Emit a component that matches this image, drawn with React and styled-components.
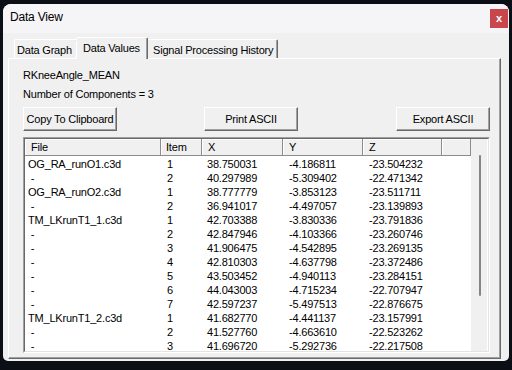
import React from 'react';
import styled, { createGlobalStyle } from 'styled-components';

const GlobalStyle = createGlobalStyle`
  html, body {
    margin: 0;
    padding: 0;
    background: #0b0e15;
  }
  body {
    font-family: "Liberation Sans", Arial, sans-serif;
    font-size: 11px;
    letter-spacing: -0.2px;
    color: #000;
  }
`;

const Desktop = styled.div`
  width: 512px;
  height: 370px;
  padding: 4px 0 0 3px;
  box-sizing: border-box;
  overflow: hidden;
`;

const Window = styled.div`
  width: 506px;
  height: 357px;
  background: #f0f0f0;
  border-radius: 8px 8px 5px 5px;
  overflow: hidden;
  display: flex;
  flex-direction: column;
`;

const TitleBar = styled.div`
  height: 29px;
  flex: none;
  background: #f5f4f6;
  display: flex;
  align-items: center;
  justify-content: space-between;
  padding: 0 1px 0 7px;
`;

const Title = styled.span`
  font-size: 12px;
  padding-bottom: 4px;
`;

const CloseButton = styled.div`
  width: 18px;
  height: 19px;
  background: #c8464c;
  color: #fff;
  font-weight: bold;
  font-size: 11px;
  display: flex;
  align-items: center;
  justify-content: center;
  padding-bottom: 2px;
  box-sizing: border-box;
`;

const Client = styled.div`
  flex: 1;
  min-height: 0;
  padding: 4px 8px 2px 5px;
  display: flex;
  flex-direction: column;
`;

const TabStrip = styled.div`
  display: flex;
  align-items: flex-end;
  height: 22px;
  padding-left: 6px;
  margin-bottom: -1px;
  position: relative;
  z-index: 1;
`;

const Tab = styled.div`
  box-sizing: border-box;
  width: ${p => p.$w}px;
  height: ${p => (p.$active ? 22 : 19)}px;
  margin: ${p => (p.$active ? '0 -2px' : '0 0 1px')};
  padding: 3px 0 0 ${p => p.$pad}px;
  line-height: 15px;
  white-space: nowrap;
  background: #f0f0f0;
  border: 1px solid;
  border-bottom: none;
  border-color: #fff #696969 transparent #fff;
  box-shadow: inset -1px 0 #a0a0a0;
  border-radius: 2px 2px 0 0;
  position: relative;
  z-index: ${p => (p.$active ? 2 : 1)};
`;

const Panel = styled.div`
  flex: 1;
  min-height: 0;
  border: 1px solid;
  border-color: #fff #696969 #696969 #fff;
  box-shadow: inset -1px -1px #a0a0a0;
  padding: 7px 10px 0 14px;
  display: flex;
  flex-direction: column;
`;

const Label = styled.div`
  line-height: 19px;
  white-space: nowrap;
`;

const ButtonRow = styled.div`
  display: flex;
  margin-top: 3px;
`;

const Button = styled.button`
  width: 94px;
  height: 24px;
  box-sizing: border-box;
  padding: 0;
  font: inherit;
  letter-spacing: inherit;
  color: #000;
  background: #f0f0f0;
  border: 1px solid;
  border-color: #fff #696969 #696969 #fff;
  box-shadow: inset -1px -1px #a0a0a0;
  margin-left: ${p => p.$ml || '0'};
`;

const ListView = styled.div`
  margin-top: 6px;
  height: 216px;
  box-sizing: border-box;
  border: 1px solid;
  border-color: #a0a0a0 #fff #fff #a0a0a0;
`;

const ListInner = styled.div`
  height: 100%;
  box-sizing: border-box;
  border: 1px solid;
  border-color: #696969 #e3e3e3 #e3e3e3 #696969;
  display: flex;
  background: #fff;
  overflow: hidden;
`;

const Table = styled.div`
  width: 446px;
  flex: none;
`;

const COLS = '136px 41px 81px 80px 79px 29px';

const HeaderRow = styled.div`
  display: grid;
  grid-template-columns: ${COLS};
  height: 17px;
`;

const HeaderCell = styled.div`
  box-sizing: border-box;
  background: #f0f0f0;
  border-right: 1px solid #8c8c8c;
  border-bottom: 1px solid #8c8c8c;
  box-shadow: inset 1px 1px #fff;
  padding-left: ${p => p.$pad}px;
  line-height: 16px;
  white-space: nowrap;
`;

const Rows = styled.div`
  padding-top: 1px;
`;

const Row = styled.div`
  display: grid;
  grid-template-columns: ${COLS};
  height: 14px;
  line-height: 14px;
`;

const Cell = styled.div`
  padding-left: ${p => p.$pad}px;
  white-space: pre;
  overflow: hidden;
`;

const ScrollTrack = styled.div`
  width: 16px;
  flex: none;
  background: #f0f0f0;
  padding-top: 16px;
  box-sizing: border-box;
`;

const Thumb = styled.div`
  width: 2px;
  height: 141px;
  margin-left: 8px;
  border-radius: 1px;
  background: #858585;
`;

const columns = [
  { name: 'File', head: 6, pad: 3 },
  { name: 'Item', head: 5, pad: 6 },
  { name: 'X', head: 6, pad: 5 },
  { name: 'Y', head: 6, pad: 6 },
  { name: 'Z', head: 6, pad: 6 },
];

const rows = [
  ['OG_RA_runO1.c3d', '1', '38.750031', '-4.186811', '-23.504232'],
  [' -', '2', '40.297989', '-5.309402', '-22.471342'],
  ['OG_RA_runO2.c3d', '1', '38.777779', '-3.853123', '-23.511711'],
  [' -', '2', '36.941017', '-4.497057', '-23.139893'],
  ['TM_LKrunT1_1.c3d', '1', '42.703388', '-3.830336', '-23.791836'],
  [' -', '2', '42.847946', '-4.103366', '-23.260746'],
  [' -', '3', '41.906475', '-4.542895', '-23.269135'],
  [' -', '4', '42.810303', '-4.637798', '-23.372486'],
  [' -', '5', '43.503452', '-4.940113', '-23.284151'],
  [' -', '6', '44.043003', '-4.715234', '-22.707947'],
  [' -', '7', '42.597237', '-5.497513', '-22.876675'],
  ['TM_LKrunT1_2.c3d', '1', '41.682770', '-4.441137', '-23.157991'],
  [' -', '2', '41.527760', '-4.663610', '-22.523262'],
  [' -', '3', '41.696720', '-5.292736', '-22.217508'],
];

const App = () => {
  return (
    <Desktop>
      <GlobalStyle />
      <Window>
        <TitleBar>
          <Title>Data View</Title>
          <CloseButton>x</CloseButton>
        </TitleBar>
        <Client>
          <TabStrip>
            <Tab $w={64} $pad={2}>Data Graph</Tab>
            <Tab $w={72} $pad={6} $active>Data Values</Tab>
            <Tab $w={132} $pad={6}>Signal Processing History</Tab>
          </TabStrip>
          <Panel>
            <Label>RKneeAngle_MEAN</Label>
            <Label>Number of Components = 3</Label>
            <ButtonRow>
              <Button>Copy To Clipboard</Button>
              <Button $ml="87px">Print ASCII</Button>
              <Button $ml="auto">Export ASCII</Button>
            </ButtonRow>
            <ListView>
              <ListInner>
                <Table>
                  <HeaderRow>
                    {columns.map(c => (
                      <HeaderCell key={c.name} $pad={c.head}>{c.name}</HeaderCell>
                    ))}
                    <HeaderCell $pad={0} />
                  </HeaderRow>
                  <Rows>
                    {rows.map((r, i) => (
                      <Row key={i}>
                        {r.map((v, j) => (
                          <Cell key={j} $pad={columns[j].pad}>{v}</Cell>
                        ))}
                      </Row>
                    ))}
                  </Rows>
                </Table>
                <ScrollTrack>
                  <Thumb />
                </ScrollTrack>
              </ListInner>
            </ListView>
          </Panel>
        </Client>
      </Window>
    </Desktop>
  );
};

export default App;
